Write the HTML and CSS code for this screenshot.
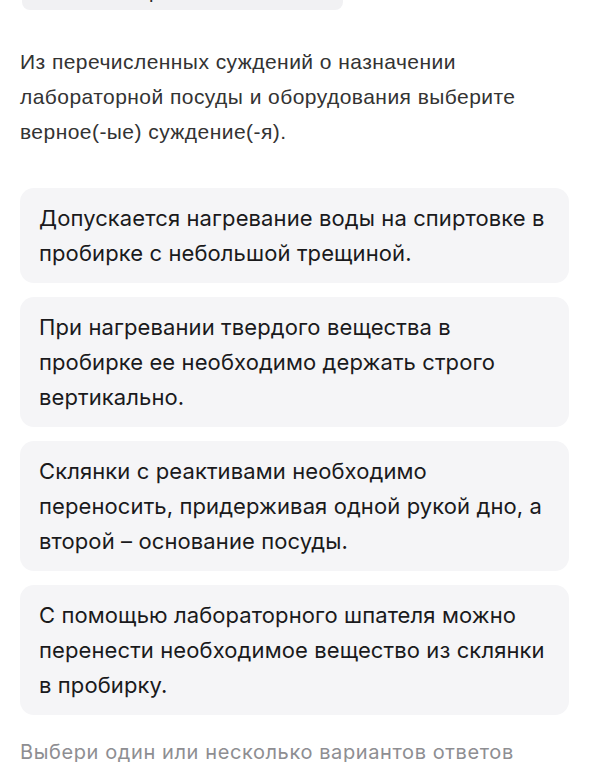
FILE: index.html
```html
<!DOCTYPE html>
<html lang="ru">
<head>
<meta charset="utf-8">
<link rel="stylesheet" href="styles.css">
</head>
<body>
<div class="page">
  <div class="badge">Несколько правильных ответов</div>
  <p class="question">Из перечисленных суждений о назначении лабораторной посуды и оборудования выберите верное(-ые) суждение(-я).</p>
  <div class="options">
    <div class="option">Допускается нагревание воды на спиртовке в пробирке с небольшой трещиной.</div>
    <div class="option">При нагревании твердого вещества в пробирке ее необходимо держать строго вертикально.</div>
    <div class="option">Склянки с реактивами необходимо переносить, придерживая одной рукой дно, а второй – основание посуды.</div>
    <div class="option">С помощью лабораторного шпателя можно перенести необходимое вещество из склянки в пробирку.</div>
  </div>
  <p class="hint">Выбери один или несколько вариантов ответов</p>
</div>
</body>
</html>
```
FILE: styles.css
```css
html, body {
  margin: 0;
  padding: 0;
  background: #ffffff;
  overflow: hidden;
}
.page {
  padding: 0 36px 0 20px;
  display: flex;
  flex-direction: column;
  align-items: flex-start;
}
.badge {
  margin-top: -26px;
  margin-left: 2px;
  background: #f1f1f3;
  border-radius: 8px;
  padding: 4px 10px 6px 10px;
  font-family: "Liberation Sans", Arial, sans-serif;
  font-size: 20px;
  letter-spacing: 0.3px;
  line-height: 26px;
  color: #2b2b2b;
}
.question {
  margin: 34px 0 0 0;
  font-family: "Liberation Sans", Arial, sans-serif;
  font-size: 21px;
  letter-spacing: 0.45px;
  line-height: 35px;
  color: #333333;
}
.options {
  align-self: stretch;
  margin-top: 39px;
  display: flex;
  flex-direction: column;
  gap: 14px;
}
.option {
  background: #f5f5f7;
  border-radius: 14px;
  padding: 13px 19px 12px 19px;
  font-family: Inter, "Noto Sans", sans-serif;
  font-size: 22px;
  letter-spacing: 0.1px;
  line-height: 35px;
  color: #1a1a1c;
}
.hint {
  margin: 22px 0 0 0;
  font-family: Inter, "Noto Sans", sans-serif;
  font-size: 20px;
  letter-spacing: 0.6px;
  line-height: 30px;
  color: #8e8e92;
}
```
